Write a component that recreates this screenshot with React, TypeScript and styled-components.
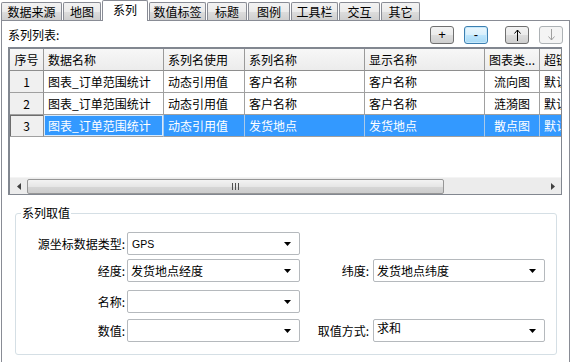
import React from 'react';
import styled, { createGlobalStyle, css } from 'styled-components';

const GlobalStyle = createGlobalStyle`
  html, body {
    margin: 0;
    padding: 0;
    background: #ffffff;
  }
  body {
    font-family: "Noto Sans CJK SC", "Liberation Sans", sans-serif;
    font-size: 12px;
    color: #000000;
  }
  * {
    box-sizing: border-box;
  }
`;

const Window = styled.div`
  width: 572px;
  height: 362px;
  overflow: hidden;
  background: #ffffff;
`;

const TabStrip = styled.div`
  position: relative;
  z-index: 2;
  display: flex;
  align-items: flex-end;
  gap: 1px;
  height: 21px;
  padding-left: 1px;
`;

const Tab = styled.div<{ $w: number; $active?: boolean }>`
  width: ${(p) => p.$w}px;
  height: 18px;
  margin-bottom: 1px;
  border: 1px solid #898c95;
  border-bottom: none;
  border-radius: 2px 2px 0 0;
  background: linear-gradient(#f3f3f3, #ebebeb 50%, #dddddd 51%, #cfcfcf);
  display: flex;
  align-items: center;
  justify-content: center;
  line-height: 14px;
  white-space: nowrap;

  ${(p) =>
    p.$active &&
    css`
      height: 21px;
      margin-bottom: 0;
      background: #ffffff;
      align-items: flex-start;
      padding-top: 2px;
    `}
`;

const Panel = styled.div`
  position: relative;
  z-index: 1;
  margin: -1px 0 0 1px;
  width: 569px;
  height: 346px;
  border: 1px solid #898c95;
  padding: 0 6px 0 6px;
  background: #ffffff;
`;

const ListBar = styled.div`
  display: flex;
  align-items: center;
  justify-content: space-between;
  height: 26px;
`;

const ListTitle = styled.span`
  line-height: 14px;
  padding-top: 2px;
`;

const Buttons = styled.div`
  display: flex;
  align-items: center;
`;

const ToolButton = styled.button<{ $space?: number; $focused?: boolean }>`
  width: 24px;
  height: 18px;
  margin: 1px 0 0 ${(p) => p.$space ?? 0}px;
  padding: 0;
  border: 1px solid #707070;
  border-radius: 3px;
  background: linear-gradient(#f2f2f2, #ebebeb 50%, #dddddd 51%, #cfcfcf);
  font-family: "Liberation Sans", sans-serif;
  font-size: 13px;
  line-height: 14px;
  color: #000000;
  display: flex;
  align-items: center;
  justify-content: center;

  ${(p) =>
    p.$focused &&
    css`
      border-color: #3c7fb1;
      background: linear-gradient(#eaf6fd, #d9f0fc 50%, #bee6fd 51%, #a7d9f5);
      box-shadow: inset 0 0 0 1px #c7e9fb;
    `}

  &:disabled {
    border-color: #adb2b5;
    background: #f4f4f4;
    color: #a0a0a0;
  }
`;

const Grid = styled.div`
  width: 554px;
  height: 148px;
  border: 1px solid #828790;
  border-left: 2px solid #828790;
  border-top: 2px solid #828790;
  display: flex;
  flex-direction: column;
  overflow: hidden;
  background: #ffffff;
`;

const GridBody = styled.div`
  flex: 1;
  overflow: hidden;
`;

const Row = styled.div<{ $h: number }>`
  display: grid;
  grid-template-columns: 34px 120px 81px 120px 120px 55px 80px;
  height: ${(p) => p.$h}px;
  white-space: nowrap;
`;

const Cell = styled.div<{
  $center?: boolean;
  $head?: boolean;
  $side?: boolean;
  $selected?: boolean;
  $focus?: boolean;
  $current?: boolean;
}>`
  display: flex;
  align-items: center;
  justify-content: ${(p) => (p.$center ? 'center' : 'flex-start')};
  padding: 0 4px;
  overflow: hidden;
  border-right: 1px solid #a0a0a0;
  border-bottom: 1px solid #a0a0a0;
  background: #ffffff;
  line-height: 14px;

  ${(p) =>
    p.$head &&
    css`
      background: linear-gradient(#f7f7f7, #ececec);
      border-right-color: #9a9a9a;
      border-bottom-color: #8e8e8e;
    `}
  ${(p) =>
    p.$side &&
    css`
      background: #f0f0f0;
      border-right-color: #8e8e8e;
    `}
  ${(p) =>
    p.$selected &&
    css`
      background: #3399ff;
      color: #ffffff;
      border-right-color: #a9c9e9;
    `}
  ${(p) =>
    p.$focus &&
    css`
      box-shadow: inset 0 0 0 1px #d6ebff;
    `}
  ${(p) =>
    p.$current &&
    css`
      box-shadow: inset 0 1px 0 #6d6d6d, inset 1px 0 0 #6d6d6d;
    `}
`;

const HScroll = styled.div`
  display: flex;
  align-items: center;
  height: 17px;
  background: #ececec;
  border-top: 1px solid #f4f4f4;
`;

const ScrollArrow = styled.div`
  width: 17px;
  height: 16px;
  display: flex;
  align-items: center;
  justify-content: center;
`;

const Thumb = styled.div`
  width: 417px;
  height: 15px;
  border: 1px solid #979797;
  border-radius: 2px;
  background: linear-gradient(#f3f3f3, #e6e6e6 50%, #d6d6d6 51%, #cdcdcd);
  display: flex;
  align-items: center;
  justify-content: center;
`;

const ScrollGap = styled.div`
  flex: 1;
`;

const GroupBox = styled.fieldset`
  margin: 11px 6px 0 7px;
  padding: 0;
  border: 1px solid #d5dfe5;
  border-radius: 3px;
`;

const GroupTitle = styled.legend`
  margin-left: 5px;
  padding: 0 1px;
  line-height: 14px;
`;

const Form = styled.div`
  display: grid;
  grid-template-columns: 111px 173px 73px 172px;
  grid-template-rows: 27px 31px 29px 23px;
  align-items: start;
  padding: 12px 0 12px 0;
`;

const FieldLabel = styled.div<{ $col: number; $row: number; $pad: number }>`
  grid-column: ${(p) => p.$col};
  grid-row: ${(p) => p.$row};
  height: 23px;
  display: flex;
  align-items: center;
  justify-content: flex-end;
  padding-right: ${(p) => p.$pad}px;
  line-height: 14px;
  white-space: nowrap;
`;

const Combo = styled.div<{ $col: number; $row: number; $top?: boolean }>`
  grid-column: ${(p) => p.$col};
  grid-row: ${(p) => p.$row};
  height: 23px;
  border: 1px solid #b5b9bd;
  border-radius: 2px;
  background: #ffffff;
  display: flex;
  align-items: ${(p) => (p.$top ? 'flex-start' : 'center')};
  padding: ${(p) => (p.$top ? '1px' : '0')} 8px 0 3px;
  line-height: 14px;
`;

const ComboText = styled.span<{ $latin?: boolean }>`
  flex: 1;
  white-space: nowrap;
  ${(p) =>
    p.$latin &&
    css`
      font-family: "Liberation Sans", sans-serif;
      font-size: 10.5px;
      padding-left: 1px;
    `}
`;

const ComboArrow = styled.svg`
  align-self: center;
  flex: none;
`;

const tabs = [
  { label: '数据来源', w: 61 },
  { label: '地图', w: 38 },
  { label: '系列', w: 46, active: true },
  { label: '数值标签', w: 57 },
  { label: '标题', w: 40 },
  { label: '图例', w: 42 },
  { label: '工具栏', w: 47 },
  { label: '交互', w: 41 },
  { label: '其它', w: 39 },
];

const columns = ['数据名称', '系列名使用', '系列名称', '显示名称', '图表类...', '超链接'];

const rows = [
  ['图表_订单范围统计', '动态引用值', '客户名称', '客户名称', '流向图', '默认'],
  ['图表_订单范围统计', '动态引用值', '客户名称', '客户名称', '涟漪图', '默认'],
  ['图表_订单范围统计', '动态引用值', '发货地点', '发货地点', '散点图', '默认'],
];

function Arrow({ down }: { down?: boolean }) {
  return (
    <svg width="7" height="12" viewBox="0 0 7 12">
      {down ? (
        <>
          <line x1="3.5" y1="0" x2="3.5" y2="11" stroke="currentColor" />
          <path d="M0.5 7.5 L3.5 11 L6.5 7.5" fill="none" stroke="currentColor" />
        </>
      ) : (
        <>
          <line x1="3.5" y1="1" x2="3.5" y2="12" stroke="currentColor" />
          <path d="M0.5 4.5 L3.5 1 L6.5 4.5" fill="none" stroke="currentColor" />
        </>
      )}
    </svg>
  );
}

function Caret() {
  return (
    <ComboArrow width="7" height="4" viewBox="0 0 7 4">
      <path d="M0 0 H7 L3.5 4 Z" fill="#000000" />
    </ComboArrow>
  );
}

function Select({
  col,
  row,
  value,
  latin,
  top,
}: {
  col: number;
  row: number;
  value?: string;
  latin?: boolean;
  top?: boolean;
}) {
  return (
    <Combo $col={col} $row={row} $top={top}>
      <ComboText $latin={latin}>{value}</ComboText>
      <Caret />
    </Combo>
  );
}

export default function App() {
  return (
    <Window>
      <GlobalStyle />
      <TabStrip>
        {tabs.map((t) => (
          <Tab key={t.label} $w={t.w} $active={t.active}>
            {t.label}
          </Tab>
        ))}
      </TabStrip>

      <Panel>
        <ListBar>
          <ListTitle>系列列表:</ListTitle>
          <Buttons>
            <ToolButton>+</ToolButton>
            <ToolButton $space={10} $focused>
              -
            </ToolButton>
            <ToolButton $space={17}>
              <Arrow />
            </ToolButton>
            <ToolButton $space={10} disabled>
              <Arrow down />
            </ToolButton>
          </Buttons>
        </ListBar>

        <Grid>
          <Row $h={22}>
            <Cell $head $center>
              序号
            </Cell>
            {columns.map((c) => (
              <Cell key={c} $head>
                {c}
              </Cell>
            ))}
          </Row>
          <GridBody>
            {rows.map((r, i) => {
              const selected = i === 2;
              return (
                <Row key={i} $h={22}>
                  <Cell $side $center $current={selected}>
                    {i + 1}
                  </Cell>
                  {r.map((v, j) => (
                    <Cell key={j} $center={j === 4} $selected={selected} $focus={selected && j === 0}>
                      {v}
                    </Cell>
                  ))}
                </Row>
              );
            })}
          </GridBody>
          <HScroll>
            <ScrollArrow>
              <svg width="4" height="7" viewBox="0 0 4 7">
                <path d="M4 0 V7 L0 3.5 Z" fill="#404040" />
              </svg>
            </ScrollArrow>
            <Thumb>
              <svg width="7" height="7" viewBox="0 0 7 7">
                <path d="M0.5 0 V7 M3.5 0 V7 M6.5 0 V7" stroke="#505050" />
              </svg>
            </Thumb>
            <ScrollGap />
            <ScrollArrow>
              <svg width="4" height="7" viewBox="0 0 4 7">
                <path d="M0 0 V7 L4 3.5 Z" fill="#404040" />
              </svg>
            </ScrollArrow>
          </HScroll>
        </Grid>

        <GroupBox>
          <GroupTitle>系列取值</GroupTitle>
          <Form>
            <FieldLabel $col={1} $row={1} $pad={2}>
              源坐标数据类型:
            </FieldLabel>
            <Select col={2} row={1} value="GPS" latin />

            <FieldLabel $col={1} $row={2} $pad={2}>
              经度:
            </FieldLabel>
            <Select col={2} row={2} value="发货地点经度" />
            <FieldLabel $col={3} $row={2} $pad={4}>
              纬度:
            </FieldLabel>
            <Select col={4} row={2} value="发货地点纬度" />

            <FieldLabel $col={1} $row={3} $pad={2}>
              名称:
            </FieldLabel>
            <Select col={2} row={3} />

            <FieldLabel $col={1} $row={4} $pad={2}>
              数值:
            </FieldLabel>
            <Select col={2} row={4} />
            <FieldLabel $col={3} $row={4} $pad={4}>
              取值方式:
            </FieldLabel>
            <Select col={4} row={4} value="求和" top />
          </Form>
        </GroupBox>
      </Panel>
    </Window>
  );
}
